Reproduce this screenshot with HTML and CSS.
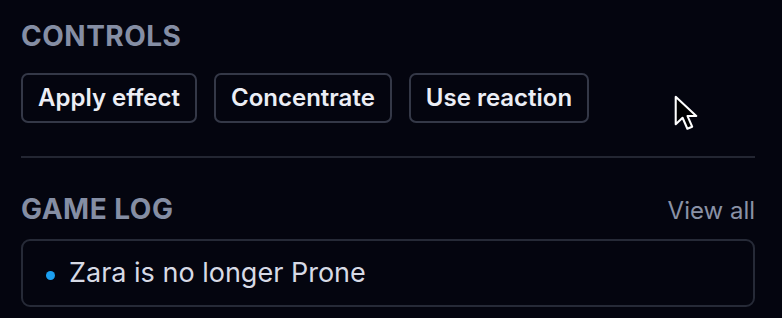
FILE: index.html
```html
<!DOCTYPE html>
<html>
<head>
<meta charset="utf-8">
<link rel="stylesheet" href="styles.css">
</head>
<body>
<div class="panel">
  <section class="controls">
    <h2 class="title">Controls</h2>
    <div class="btn-row">
      <button class="btn">Apply effect</button>
      <button class="btn">Concentrate</button>
      <button class="btn">Use reaction</button>
    </div>
  </section>
  <hr class="divider">
  <section class="log">
    <div class="log-head">
      <h2 class="title">Game log</h2>
      <a class="view-all">View all</a>
    </div>
    <div class="log-box">
      <span class="dot"></span>
      <span class="log-text">Zara is no longer Prone</span>
    </div>
  </section>
</div>
<svg class="cursor" width="24" height="38" viewBox="0 0 14 22" aria-hidden="true">
  <path d="M1 1 L1 17 L5 13.2 L7.8 19.6 L10.6 18.4 L7.9 12.2 L13 12.2 Z" fill="#000" stroke="#fff" stroke-width="1.2" stroke-linejoin="round"/>
</svg>
</body>
</html>
```
FILE: styles.css
```css
html, body {
  margin: 0;
  background: #04050f;
}
body {
  font-family: Inter, "Noto Sans", sans-serif;
  position: relative;
  height: 318px;
  overflow: hidden;
}
.panel {
  padding: 20px 27px 0 21px;
}
.title {
  margin: 0;
  font-size: 28px;
  line-height: 32px;
  font-weight: 700;
  text-transform: uppercase;
  letter-spacing: 0.5px;
  color: #858ea4;
}
.btn-row {
  display: flex;
  gap: 17px;
  margin-top: 21px;
}
.btn {
  font-family: inherit;
  font-size: 24px;
  font-weight: 600;
  line-height: 32px;
  color: #eceef5;
  background: transparent;
  border: 2px solid #343847;
  border-radius: 7px;
  padding: 7px 15px;
  margin: 0;
}
.divider {
  border: 0;
  border-top: 2px solid #232632;
  margin: 33px 0 0;
}
.log-head {
  display: flex;
  justify-content: space-between;
  align-items: baseline;
  margin-top: 35px;
}
.view-all {
  font-size: 24px;
  line-height: 32px;
  color: #8a92a6;
}
.log-box {
  margin-top: 12px;
  height: 68px;
  box-sizing: border-box;
  border: 2px solid #262a37;
  border-radius: 9px;
  display: flex;
  align-items: center;
  padding: 0 23px;
  gap: 14px;
}
.dot {
  width: 9px;
  height: 9px;
  border-radius: 50%;
  background: #1b9ff0;
  flex: none;
  margin-top: 4px;
}
.log-text {
  font-size: 27px;
  line-height: 32px;
  color: #d7dae5;
}
.cursor {
  position: absolute;
  left: 674px;
  top: 95px;
}
```
